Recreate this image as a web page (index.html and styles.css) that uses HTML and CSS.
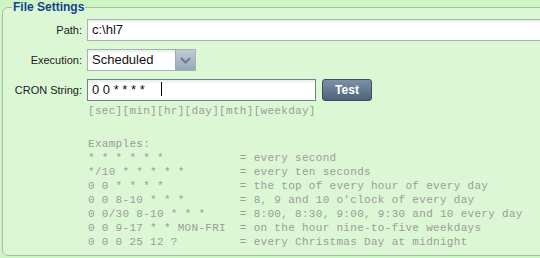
FILE: index.html
```html
<!DOCTYPE html>
<html lang="en">
<head>
  <meta charset="UTF-8" />
  <title>File Settings</title>
  <link rel="stylesheet" href="styles.css">
</head>
<body>
  <fieldset class="settings">
    <legend>File Settings</legend>

    <div class="form">
      <label class="label">Path:</label>
      <div class="field field-path">c:\hl7</div>

      <label class="label">Execution:</label>
      <div class="combo">
        <span class="combo-text">Scheduled</span>
        <span class="combo-trigger">
          <svg width="11" height="7" viewBox="0 0 11 7"><path d="M1 1 L5.5 5.5 L10 1" fill="none" stroke="#6a7d90" stroke-width="2"/></svg>
        </span>
      </div>

      <label class="label">CRON String:</label>
      <div class="cron-row">
        <div class="field field-cron">0 0 * * * *<span class="caret"></span></div>
        <button class="btn">Test</button>
      </div>
    </div>

    <pre class="hint">[sec][min][hr][day][mth][weekday]</pre>

<pre class="examples">Examples:
* * * * * *           = every second
*/10 * * * * *        = every ten seconds
0 0 * * * *           = the top of every hour of every day
0 0 8-10 * * *        = 8, 9 and 10 o'clock of every day
0 0/30 8-10 * * *     = 8:00, 8:30, 9:00, 9:30 and 10 every day
0 0 9-17 * * MON-FRI  = on the hour nine-to-five weekdays
0 0 0 25 12 ?         = every Christmas Day at midnight</pre>
  </fieldset>
</body>
</html>
```

FILE: styles.css
```css
body {
  margin: 0;
  background: #cef5c6;
  font-family: 'Liberation Sans', Arial, sans-serif;
  overflow: hidden;
}

.settings {
  margin: 0 -30px 0 2px;
  padding: 5px 0 6px 9px;
  border: 1px solid #a9bca6;
  border-radius: 6px;
  background: #dcf7d4;
}

.settings legend {
  padding: 0 1px;
  font-size: 12px;
  font-weight: bold;
  color: #15428b;
}

.form {
  display: grid;
  grid-template-columns: 70px 1fr;
  column-gap: 5px;
  row-gap: 8px;
  align-items: center;
}

.label {
  text-align: right;
  white-space: nowrap;
  font-size: 11px;
  color: #222;
}

.field {
  box-sizing: border-box;
  height: 22px;
  padding: 0 4px;
  line-height: 20px;
  font-size: 13px;
  color: #111;
  border: 1px solid #a5b4b0;
  background: linear-gradient(#e9ecec, #fff 4px);
}

.field-cron {
  width: 229px;
  border-color: #6b8789;
}

.caret {
  display: inline-block;
  width: 1px;
  height: 14px;
  margin-left: 16px;
  vertical-align: -2px;
  background: #000;
}

.combo {
  box-sizing: border-box;
  display: flex;
  width: 109px;
  height: 22px;
  border: 1px solid #a5b4b0;
  background: linear-gradient(#e9ecec, #fff 4px);
}

.combo-text {
  flex: 1;
  padding: 0 4px;
  line-height: 20px;
  font-size: 13px;
  color: #111;
}

.combo-trigger {
  width: 19px;
  display: flex;
  align-items: center;
  justify-content: center;
  border-left: 1px solid #9aa9b6;
  background: linear-gradient(#c0cbd6, #96a8ba);
}

.cron-row {
  display: flex;
  gap: 6px;
}

.btn {
  width: 50px;
  height: 22px;
  padding: 0;
  border: 1px solid #3f4e5f;
  border-radius: 3px;
  background: linear-gradient(#7c91a7, #4c627a);
  color: #fff;
  font-family: 'Liberation Sans', Arial, sans-serif;
  font-size: 12px;
  font-weight: bold;
}

.hint,
.examples {
  margin: 0 0 0 76px;
  font-family: 'Liberation Mono', 'Courier New', monospace;
  font-size: 11px;
  letter-spacing: 0.3px;
  line-height: 14px;
  color: #9c9c9c;
}

.hint {
  margin-top: 3px;
}

.examples {
  margin-top: 19px;
}
```
